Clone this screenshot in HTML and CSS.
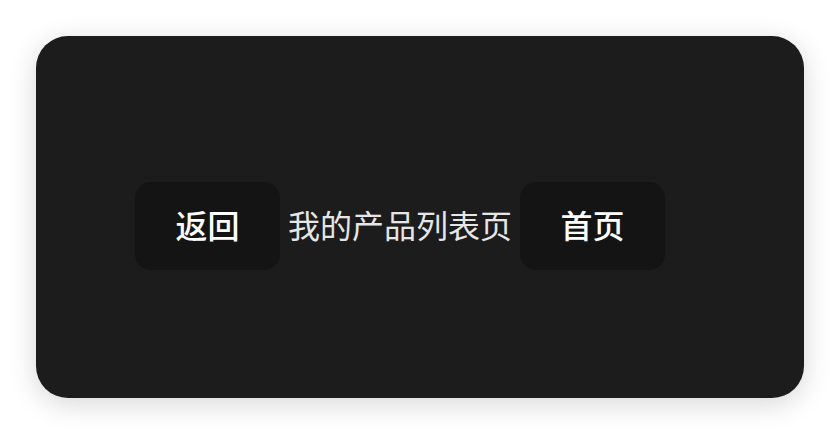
FILE: index.html
```html
<!DOCTYPE html>
<html lang="zh">
<head>
<meta charset="utf-8">
<link rel="stylesheet" href="styles.css">
</head>
<body>
<div class="card">
  <div class="bar">
    <div class="btn">返回</div>
    <div class="title">我的产品列表页</div>
    <div class="btn">首页</div>
  </div>
</div>
</body>
</html>
```
FILE: styles.css
```css
html, body {
  margin: 0;
  padding: 0;
  background: #ffffff;
}
body {
  padding: 36px;
  font-family: "Noto Sans CJK SC", "Noto Sans", sans-serif;
}
.card {
  width: 768px;
  height: 362px;
  box-sizing: border-box;
  background: #1c1c1c;
  border-radius: 32px;
  box-shadow: 0 6px 28px rgba(0, 0, 0, 0.16);
  padding: 146px 0 0 99px;
}
.bar {
  display: flex;
  align-items: center;
  gap: 8px;
}
.btn {
  width: 145px;
  height: 88px;
  box-sizing: border-box;
  padding-bottom: 4px;
  display: flex;
  align-items: center;
  justify-content: center;
  background: #141414;
  border-radius: 16px;
  color: #ffffff;
  font-size: 32px;
  font-weight: 500;
  line-height: 1;
}
.title {
  color: #e6e6e6;
  font-size: 32px;
  line-height: 1;
  margin-bottom: 4px;
}
```
